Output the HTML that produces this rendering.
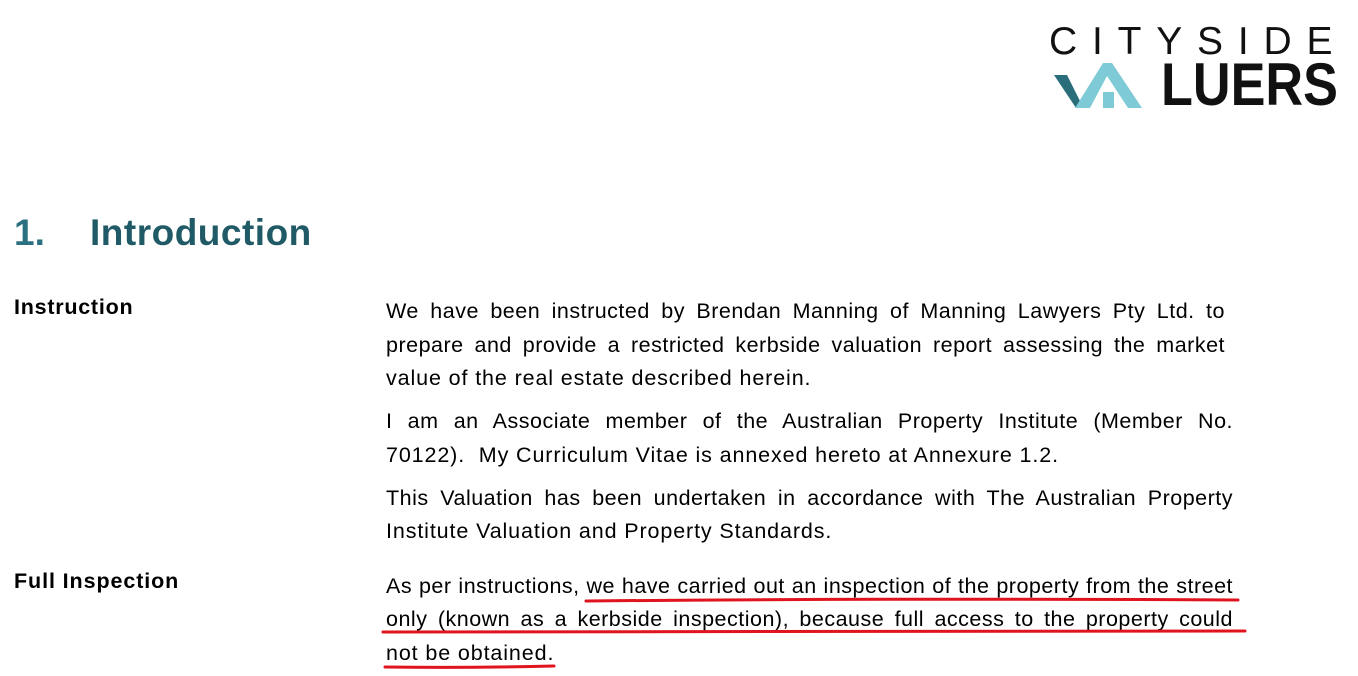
<!DOCTYPE html>
<html><head><meta charset="utf-8"><style>
body{margin:0;width:1358px;height:676px;background:#fff;position:relative;overflow:hidden;font-family:"Liberation Sans",Arial,sans-serif;color:#000}
.l{position:absolute;left:386px;font-size:21.5px;line-height:33px;white-space:nowrap;letter-spacing:0.88px}
.j{text-align:justify;text-align-last:justify;white-space:normal;letter-spacing:0.5px}
.lab{position:absolute;left:14px;font-weight:bold;font-size:21.5px;line-height:30px;letter-spacing:0.75px;white-space:nowrap}
h1{position:absolute;margin:0;top:210px;left:14px;font-size:37px;font-weight:bold;color:#1f5a66;line-height:46px}
</style></head><body>
<div style="position:absolute;left:1049px;top:22px;font-size:39px;letter-spacing:14.8px;line-height:40px;color:#111;font-weight:normal">CITYSIDE</div>
<svg style="position:absolute;left:1050px;top:60px" width="100" height="50">
<polygon points="4,15 17,15 33,47 26,48" fill="#2a6e7b"/>
<polygon points="25,48 53,3 62,3 92,48 78,48 57,16 40,48" fill="#7ecad6"/>
<rect x="53" y="32" width="11" height="16" fill="#7ecad6"/>
</svg>
<div style="position:absolute;left:1161px;top:55px;font-size:60px;font-weight:bold;line-height:60px;color:#111;transform:scaleX(0.87);transform-origin:0 0">LUERS</div>
<h1><span style="color:#2b7080">1.</span><span style="position:absolute;left:76px;white-space:nowrap;letter-spacing:0.5px">Introduction</span></h1>
<div class="lab" style="top:292px">Instruction</div>
<div class="lab" style="top:566px;letter-spacing:0.9px">Full Inspection</div>
<div class="l j" style="top:295px;width:839px">We have been instructed by Brendan Manning of Manning Lawyers Pty Ltd. to</div>
<div class="l j" style="top:329px;width:839px">prepare and provide a restricted kerbside valuation report assessing the market</div>
<div class="l" style="top:362px">value of the real estate described herein.</div>
<div class="l j" style="top:405px;width:847px">I am an Associate member of the Australian Property Institute (Member No.</div>
<div class="l" style="top:439px">70122).&nbsp; My Curriculum Vitae is annexed hereto at Annexure 1.2.</div>
<div class="l j" style="top:482px;width:847px">This Valuation has been undertaken in accordance with The Australian Property</div>
<div class="l" style="top:515px">Institute Valuation and Property Standards.</div>
<div class="l j" style="top:570px;width:847px">As per instructions, we have carried out an inspection of the property from the street</div>
<div class="l j" style="top:603px;width:847px">only (known as a kerbside inspection), because full access to the property could</div>
<div class="l" style="top:637px">not be obtained.</div>
<svg style="position:absolute;left:0;top:0" width="1358" height="676">
<path d="M586 601 Q900 598 1238 600" stroke="#e0141e" stroke-width="3" fill="none" stroke-linecap="round"/>
<path d="M383 632 Q800 630 1245 631" stroke="#e0141e" stroke-width="3" fill="none" stroke-linecap="round"/>
<path d="M385 667 Q470 668 554 666" stroke="#e0141e" stroke-width="3" fill="none" stroke-linecap="round"/>
</svg>
</body></html>
